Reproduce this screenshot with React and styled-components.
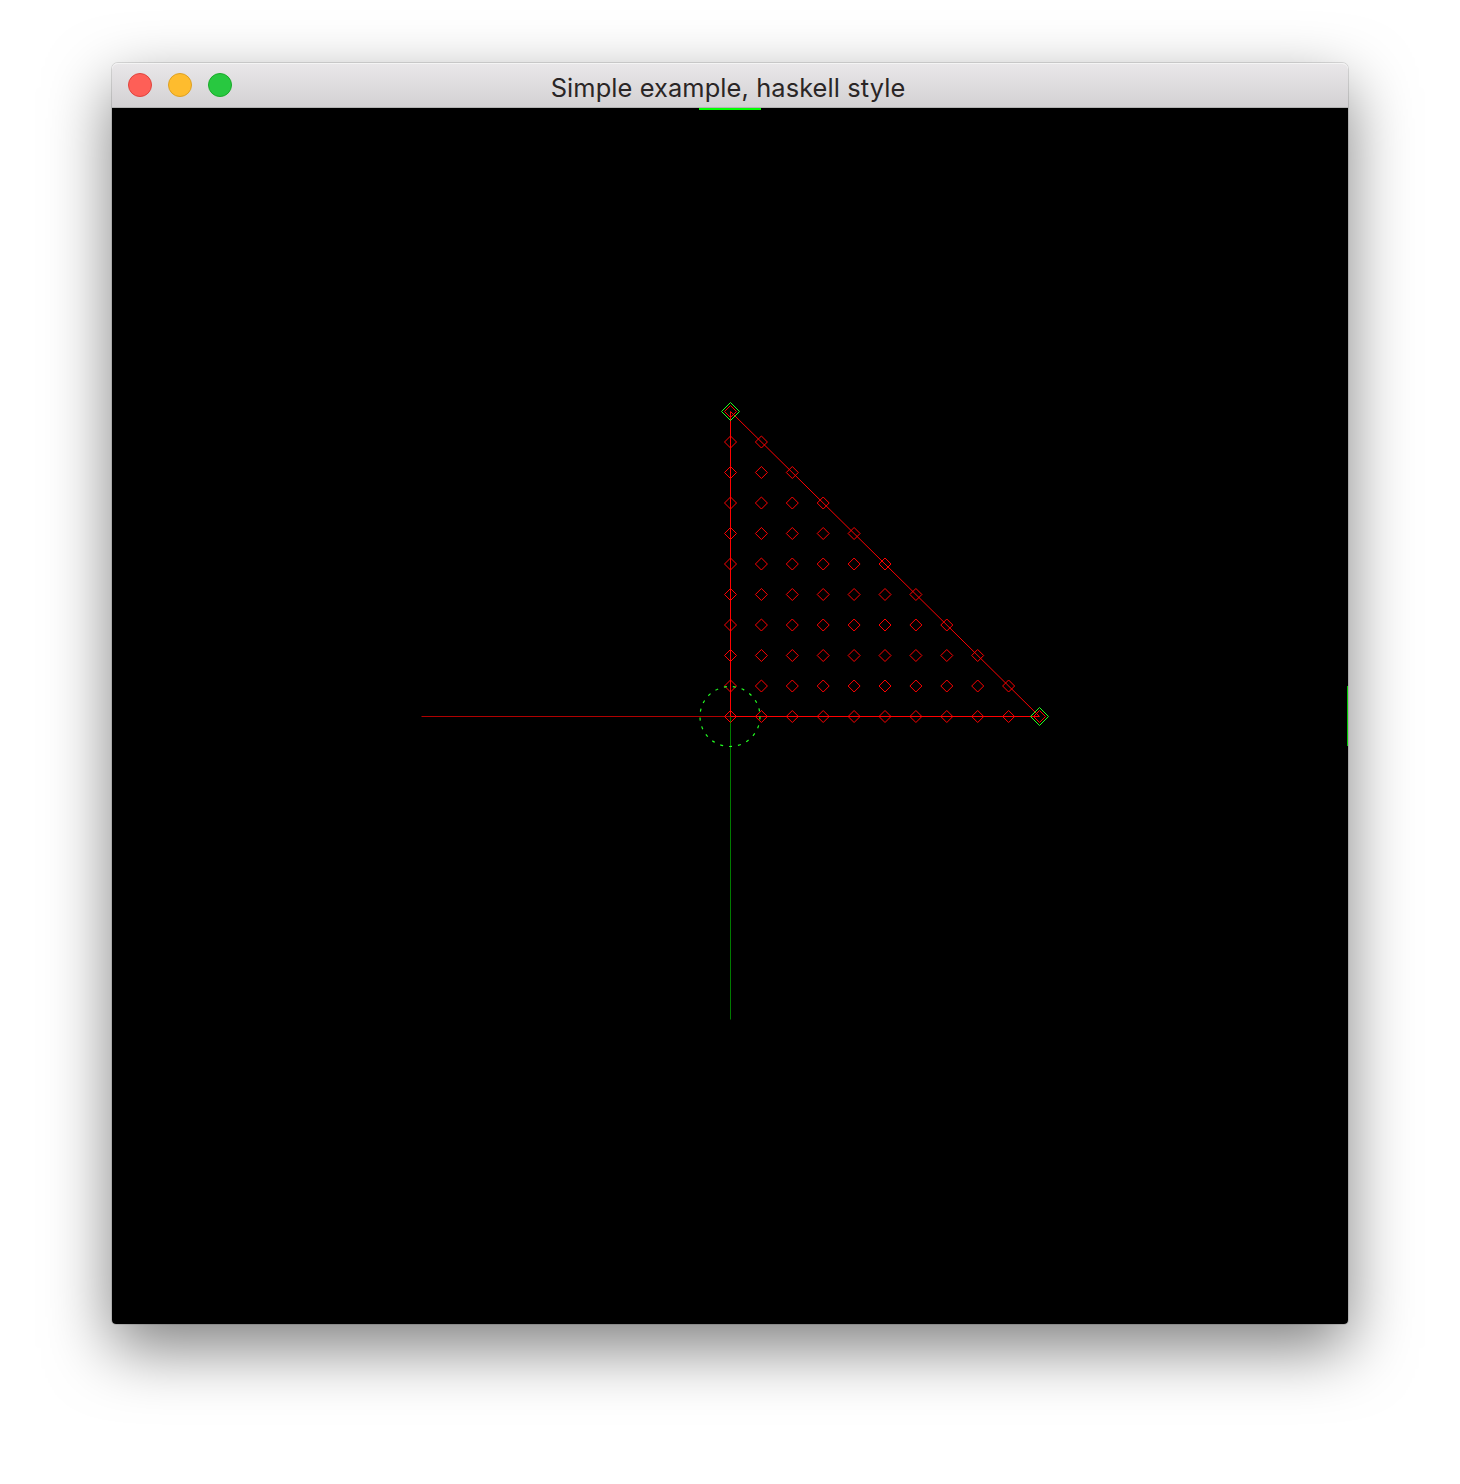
import React from 'react';
import styled, { createGlobalStyle } from 'styled-components';

const GlobalStyle = createGlobalStyle`
  html, body {
    margin: 0;
    padding: 0;
    background: #ffffff;
  }
`;

const Page = styled.div`
  width: 1460px;
  height: 1484px;
  padding: 63px 112px 0 112px;
  box-sizing: border-box;
  overflow: hidden;
`;

const Window = styled.div`
  width: 1236px;
  display: flex;
  flex-direction: column;
  border-radius: 6px 6px 4px 4px;
  box-shadow: 0 0 0 1px rgba(0, 0, 0, 0.12), 0 24px 64px rgba(0, 0, 0, 0.5);
`;

const TitleBar = styled.div`
  height: 44px;
  display: grid;
  grid-template-columns: 1fr auto 1fr;
  align-items: center;
  background: linear-gradient(#e9e7e9, #d3d1d3);
  border-radius: 6px 6px 0 0;
  border-bottom: 1px solid #b3b3b3;
  box-shadow: inset 0 1px 0 #f4f4f4;
`;

const Lights = styled.div`
  display: flex;
  gap: 16px;
  padding-left: 16px;
`;

const Light = styled.span`
  width: 24px;
  height: 24px;
  border-radius: 50%;
  box-sizing: border-box;
  background: ${(p) => p.fill};
  border: 1px solid ${(p) => p.edge};
`;

const Title = styled.div`
  font-family: Inter, "Noto Sans", sans-serif;
  font-size: 25.4px;
  color: #2a2626;
  letter-spacing: 0.1px;
  margin-top: 4px;
  margin-left: -4px;
`;

const Canvas = styled.div`
  height: 1216px;
  background: #000000;
  border-radius: 0 0 4px 4px;
  overflow: hidden;
`;

const Drawing = styled.svg`
  display: block;
`;

// origin of the plot in canvas pixels
const OX = 618.5;
const OY = 608.5;
const SX = 30.9;
const SY = 30.5;

const Diamond = ({ x, y, r, color }) => (
  <polygon
    points={`${x},${y - r} ${x + r},${y} ${x},${y + r} ${x - r},${y}`}
    fill="none"
    stroke={color}
    strokeWidth="1"
  />
);

const Plot = () => {
  const points = [];
  for (let j = 0; j <= 10; j++) {
    for (let i = 0; i + j <= 10; i++) {
      points.push([OX + i * SX, OY - j * SY]);
    }
  }
  const top = [OX, OY - 10 * SY];
  const right = [OX + 10 * SX, OY];

  return (
    <Drawing width="1236" height="1216" viewBox="0 0 1236 1216">
      {/* stray green strokes at the edges */}
      <line x1="587" y1="1" x2="649" y2="1" stroke="#00ff00" strokeWidth="2" />
      <line x1="1235.5" y1="578" x2="1235.5" y2="638" stroke="#00cc00" strokeWidth="1" />

      {/* axes */}
      <line x1={OX - 309} y1={OY} x2={OX} y2={OY} stroke="#b00000" strokeWidth="1" />
      <line x1={OX} y1={OY} x2={OX} y2={OY + 303} stroke="#007a00" strokeWidth="1" />

      {/* triangle */}
      <line x1={OX} y1={OY} x2={right[0]} y2={OY} stroke="#ff0000" strokeWidth="1" />
      <line x1={OX} y1={top[1]} x2={OX} y2={OY} stroke="#ff0000" strokeWidth="1" />
      <line x1={top[0]} y1={top[1]} x2={right[0]} y2={right[1]} stroke="#ff0000" strokeWidth="1" />

      {points.map(([x, y]) => (
        <Diamond key={`${x}-${y}`} x={x} y={y} r={6} color="#ff0000" />
      ))}

      <Diamond x={top[0]} y={top[1]} r={9} color="#22ff22" />
      <Diamond x={right[0]} y={right[1]} r={9} color="#22ff22" />

      <circle
        cx={OX - 0.5}
        cy={OY}
        r="30"
        fill="none"
        stroke="#22ff22"
        strokeWidth="1.2"
        strokeDasharray="3 6"
      />
    </Drawing>
  );
};

const App = () => (
  <>
    <GlobalStyle />
    <Page>
      <Window>
        <TitleBar>
          <Lights>
            <Light fill="#fe5f57" edge="#e0443e" />
            <Light fill="#febc2e" edge="#dea123" />
            <Light fill="#28c840" edge="#1aab29" />
          </Lights>
          <Title>Simple example, haskell style</Title>
          <span />
        </TitleBar>
        <Canvas>
          <Plot />
        </Canvas>
      </Window>
    </Page>
  </>
);

export default App;
